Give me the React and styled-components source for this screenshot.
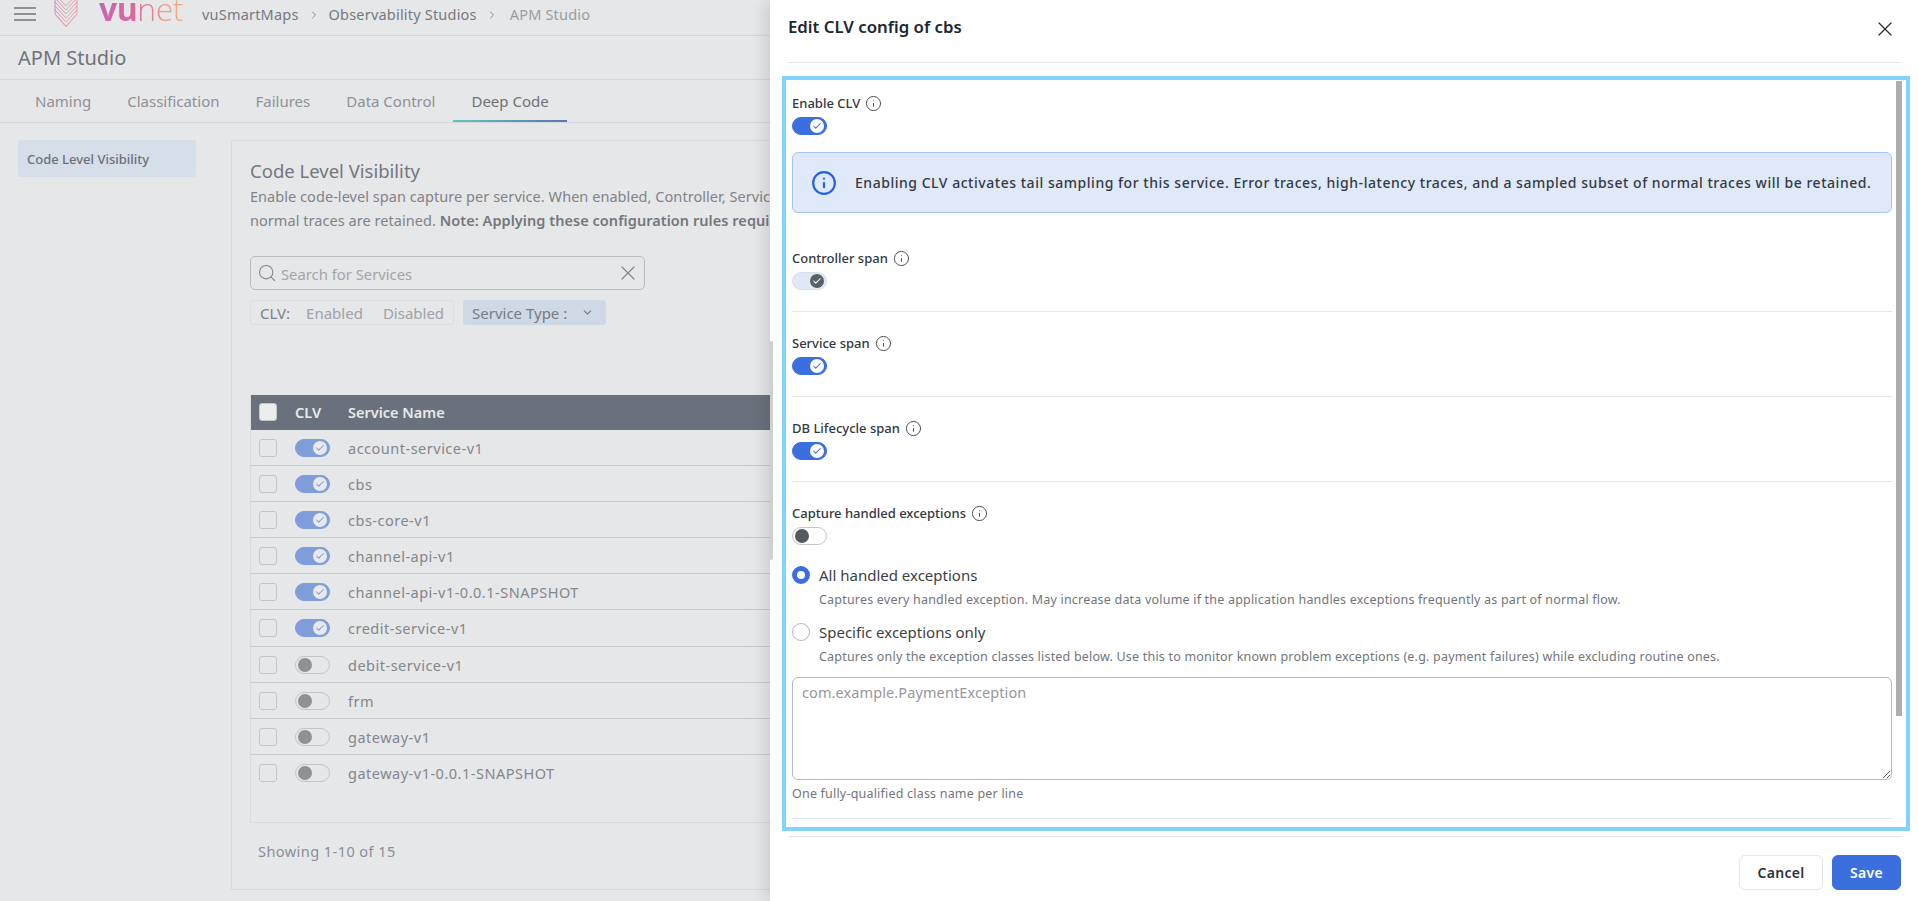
import styled, { createGlobalStyle } from 'styled-components';
import { Check, ChevronDown, ChevronRight, Info, Search, X } from 'lucide-react';

const FONT = `"Noto Sans", "Open Sans", sans-serif`;

const GlobalStyle = createGlobalStyle`
  html, body {
    margin: 0;
    height: 100%;
    overflow: hidden;
    background: #e6e7e9;
    font-family: ${FONT};
  }
  * { box-sizing: border-box; }
`;

const Page = styled.div`
  position: relative;
  width: 1918px;
  height: 901px;
  overflow: hidden;
  background: #e6e7e9;
  color: #76797f;
`;

const TopBar = styled.div`
  height: 36px;
  display: flex;
  align-items: flex-start;
  padding-left: 12px;
  border-bottom: 1px solid #d6d7da;
  overflow: hidden;
`;

const Burger = styled.svg`
  flex: none;
  margin-top: 4px;
`;

const LogoMark = styled.svg`
  margin-left: 18px;
  flex: none;
`;

const Wordmark = styled.div`
  margin: -5px 0 0 21px;
  width: 86px;
  font-family: "Open Sans", sans-serif;
  font-size: 32px;
  line-height: 28px;
  letter-spacing: -0.5px;
  font-weight: 300;
  background: linear-gradient(90deg, #c566b0 0%, #e0689b 45%, #ee9a7d 75%, #edb27e 100%);
  -webkit-background-clip: text;
  background-clip: text;
  color: transparent;

  b { font-weight: 700; }
`;

const Crumbs = styled.div`
  margin-left: 17px;
  height: 28px;
  display: flex;
  align-items: center;
  font-size: 14.5px;
  letter-spacing: 0.2px;

  svg { margin: 2px 9px 0; color: #8b8d91; }
`;

const Crumb = styled.span`
  margin-left: ${(p) => (p.$current ? '3px' : '0')};
  color: ${(p) => (p.$current ? '#9a9ca1' : '#76797f')};
`;

const TitleRow = styled.div`
  height: 44px;
  padding-left: 18px;
  display: flex;
  align-items: center;
  font-size: 20px;
  color: #70737a;
  border-bottom: 1px solid #d6d7da;
`;

const Tabs = styled.div`
  height: 43px;
  padding-left: 17px;
  display: flex;
  border-bottom: 1px solid #d6d7da;
`;

const Tab = styled.div`
  position: relative;
  height: 42px;
  padding: 0 18px;
  display: flex;
  align-items: center;
  font-size: 15px;
  color: ${(p) => (p.$active ? '#6e7177' : '#8f9196')};

  ${(p) =>
    p.$active &&
    `&::after {
      content: '';
      position: absolute;
      left: 0;
      right: 0;
      bottom: 0;
      height: 2px;
      background: linear-gradient(90deg, #5cc7bd, #5d73b5);
    }`}
`;

const Content = styled.div`
  display: flex;
  align-items: flex-start;
  padding: 17px 0 0 18px;
`;

const SideNav = styled.div`
  flex: none;
  width: 178px;
  height: 37px;
  padding-left: 9px;
  display: flex;
  align-items: center;
  border-radius: 2px;
  background: #d6deE9;
  font-size: 13px;
  font-weight: 500;
  color: #6b6f76;
`;

const Panel = styled.div`
  flex: none;
  width: 1660px;
  height: 750px;
  margin-left: 35px;
  padding: 17px 18px;
  border: 1px solid #d9dadd;
`;

const PanelTitle = styled.div`
  font-size: 18.5px;
  line-height: 26px;
  color: #74777d;
`;

const Description = styled.div`
  font-size: 14.5px;
  line-height: 24px;
  letter-spacing: 0.05px;
  white-space: nowrap;
  color: #808388;

  b { font-weight: 600; color: #74777d; }
`;

const SearchBox = styled.div`
  width: 395px;
  height: 34px;
  margin-top: 24px;
  padding: 0 4px 0 6px;
  display: flex;
  align-items: center;
  border: 1px solid #b9bbbf;
  border-radius: 5px;
  font-size: 14.8px;
  color: #a2a4a8;

  span { margin: 2px 0 0 4px; flex: 1; }
  svg { color: #85878c; }
`;

const FilterRow = styled.div`
  margin-top: 10px;
  display: flex;
  gap: 9px;
`;

const ClvFilter = styled.div`
  width: 204px;
  height: 25px;
  padding-left: 9px;
  display: flex;
  align-items: center;
  border: 1px solid #dcdde0;
  border-radius: 3px;
  font-size: 15px;
  color: #a0a2a6;

  b { font-weight: 400; color: #7b7e84; margin-right: 16px; }
  span { margin-right: 20px; }
`;

const TypeFilter = styled.div`
  width: 143px;
  height: 25px;
  padding-left: 9px;
  display: flex;
  align-items: center;
  gap: 14px;
  border-radius: 3px;
  background: #cfd9e6;
  font-size: 15px;
  color: #757b84;
`;

const Table = styled.div`
  height: 428px;
  margin-top: 70px;
  border-left: 1px solid #d9dadd;
  border-bottom: 1px solid #d9dadd;
`;

const HeadRow = styled.div`
  height: 35px;
  padding: 0 0 2px 8px;
  display: flex;
  align-items: center;
  background: #6b717c;
  color: #e8e9eb;
  font-size: 14.5px;
  font-weight: 600;
`;

const Row = styled.div`
  height: ${(p) => (p.$tall ? 37 : 36)}px;
  padding-left: 8px;
  display: flex;
  align-items: center;
  border-bottom: ${(p) => (p.$last ? 'none' : '1px solid #c9cacd')};
  font-size: 14.5px;
  letter-spacing: 0.5px;
  color: #83868b;
`;

const CheckCell = styled.span`
  flex: none;
  width: 18px;
  height: 18px;
  border-radius: 3px;
  border: 1px solid #c3c5c8;
  background: ${(p) => (p.$head ? '#eceded' : 'transparent')};
`;

const ClvCell = styled.div`
  flex: none;
  width: 53px;
  margin-left: 18px;
  display: flex;
`;

const SwitchTrack = styled.span`
  flex: none;
  width: 35px;
  height: 18px;
  padding: 0 2px;
  display: flex;
  align-items: center;
  justify-content: ${(p) => (p.$on ? 'flex-end' : 'flex-start')};
  border-radius: 9px;
  border: 1px solid ${(p) => p.$border};
  background: ${(p) => p.$bg};
`;

const SwitchKnob = styled.span`
  width: 14px;
  height: 14px;
  display: flex;
  align-items: center;
  justify-content: center;
  border-radius: 50%;
  background: ${(p) => p.$color};
  color: ${(p) => p.$tick};
`;

const Showing = styled.div`
  margin: 18px 0 0 8px;
  font-size: 14.5px;
  letter-spacing: 0.45px;
  color: #8b8e93;
`;

const EdgeBar = styled.div`
  position: absolute;
  left: 770px;
  top: 341px;
  width: 3px;
  height: 219px;
  border-radius: 0 2px 2px 0;
  background: #d0d0d0;
  z-index: 3;
`;

const Drawer = styled.aside`
  position: absolute;
  top: 0;
  right: 0;
  bottom: 0;
  width: 1148px;
  display: flex;
  flex-direction: column;
  background: #fff;
  box-shadow: -6px 0 14px rgba(0, 0, 0, 0.1);
  color: #2c3038;
  z-index: 2;
`;

const DrawerHead = styled.div`
  flex: none;
  height: 63px;
  margin: 0 16px 0 18px;
  padding: 15px 0 0 0;
  display: flex;
  justify-content: space-between;
  border-bottom: 1px solid #e4e5e7;
  font-size: 16.8px;
  font-weight: 600;
  line-height: 24px;
  color: #22262d;
`;

const CloseIcon = styled(X)`
  margin: 2px 5px 0 0;
  color: #2c3038;
`;

const Body = styled.div`
  position: relative;
  flex: none;
  height: 755px;
  margin: 13px 8px 0 12px;
  padding: 0 14px 0 6px;
  border: 4px solid #80d4ff;
  overflow: hidden;
`;

const ScrollThumb = styled.div`
  position: absolute;
  top: 1px;
  right: 4px;
  width: 6px;
  height: 635px;
  background: #aeaeae;
`;

const Section = styled.section`
  padding: ${(p) => p.$top ?? 22}px 0 ${(p) => p.$bottom ?? 21}px;
  border-bottom: ${(p) => (p.$plain ? 'none' : '1px solid #e4e5e7')};
`;

const FieldLabel = styled.div`
  height: 18px;
  margin-bottom: 5px;
  display: flex;
  align-items: center;
  gap: 5px;
  font-size: 13px;
  font-weight: 500;
  color: #33373e;

  svg { color: #4b4f56; }
`;

const Alert = styled.div`
  height: 61px;
  margin-top: 17px;
  padding-left: 18px;
  display: flex;
  align-items: center;
  gap: 18px;
  border: 1px solid #a9c4f2;
  border-radius: 6px;
  background: #e0e9fa;
  font-size: 14px;
  font-weight: 500;
  letter-spacing: 0.53px;
  color: #343a44;

  svg { flex: none; color: #2563d9; }
`;

const RadioRow = styled.div`
  margin-top: ${(p) => p.$top}px;
  height: 18px;
  display: flex;
  align-items: center;
  gap: 9px;
  font-size: 15px;
  color: #3b3f46;
`;

const RadioDot = styled.span`
  flex: none;
  width: 18px;
  height: 18px;
  border-radius: 50%;
  border: ${(p) => (p.$on ? '5px solid #3b6fde' : '1px solid #b4b6ba')};
  background: #fff;
`;

const RadioHint = styled.div`
  margin: 7px 0 0 27px;
  font-size: 12.5px;
  line-height: 18px;
  letter-spacing: 0.2px;
  color: #72757b;
`;

const ClassInput = styled.textarea`
  display: block;
  width: 100%;
  height: 103px;
  margin-top: 11px;
  padding: 4px 9px;
  border: 1px solid #b6b8bb;
  border-radius: 6px;
  outline: none;
  resize: vertical;
  font-family: ${FONT};
  font-size: 14.5px;
  letter-spacing: 0.1px;
  line-height: 20px;

  &::placeholder { color: #96989c; }
`;

const InputHint = styled.div`
  margin-top: 5px;
  font-size: 12.5px;
  line-height: 18px;
  letter-spacing: 0.2px;
  color: #72757b;
`;

const DrawerFoot = styled.div`
  flex: none;
  height: 65px;
  margin: 5px 16px 0 18px;
  padding: 18px 1px 0 0;
  display: flex;
  justify-content: flex-end;
  gap: 9px;
  border-top: 1px solid #e4e5e7;
`;

const Button = styled.button`
  width: ${(p) => p.$width}px;
  height: 35px;
  border-radius: 6px;
  border: 1px solid ${(p) => (p.$primary ? '#3b6fde' : '#e4e5e7')};
  background: ${(p) => (p.$primary ? '#3b6fde' : '#fff')};
  color: ${(p) => (p.$primary ? '#fff' : '#2f333a')};
  font-family: ${FONT};
  font-size: 14px;
  font-weight: 600;
  letter-spacing: 0.3px;
`;

const services = [
  ['account-service-v1', true],
  ['cbs', true],
  ['cbs-core-v1', true],
  ['channel-api-v1', true],
  ['channel-api-v1-0.0.1-SNAPSHOT', true],
  ['credit-service-v1', true],
  ['debit-service-v1', false],
  ['frm', false],
  ['gateway-v1', false],
  ['gateway-v1-0.0.1-SNAPSHOT', false],
];

const switchThemes = {
  on: { bg: '#3b6fde', border: '#3b6fde', knob: '#fff', tick: '#3b6fde' },
  off: { bg: '#fff', border: '#c4c5c8', knob: '#55585e', tick: '#fff' },
  locked: { bg: '#e0e7f5', border: '#d8dfee', knob: '#5a5e66', tick: '#fff' },
  dimOn: { bg: '#7f9ddb', border: '#7f9ddb', knob: '#e8e9eb', tick: '#7f9ddb' },
  dimOff: { bg: '#e6e7e9', border: '#c4c5c8', knob: '#8f9194', tick: '#fff' },
};

function Toggle({ kind, on }) {
  const t = switchThemes[kind];
  return (
    <SwitchTrack $on={on} $bg={t.bg} $border={t.border}>
      <SwitchKnob $color={t.knob} $tick={t.tick}>
        {on && <Check size={10} strokeWidth={2.5} />}
      </SwitchKnob>
    </SwitchTrack>
  );
}

function Label({ children }) {
  return (
    <FieldLabel>
      {children}
      <Info size={17} strokeWidth={1.4} />
    </FieldLabel>
  );
}

function Logo() {
  const rows = [-6, -2, 2, 6, 10, 14];
  return (
    <LogoMark width="24" height="28" viewBox="0 0 24 28" fill="none">
      <defs>
        <linearGradient id="mark" x1="0" y1="0" x2="1" y2="1">
          <stop offset="0" stopColor="#c98ac0" />
          <stop offset="0.6" stopColor="#e79aa9" />
          <stop offset="1" stopColor="#efc39a" />
        </linearGradient>
      </defs>
      {rows.map((y) => (
        <path key={y} d={`M1 ${y}L12 ${y + 12}L23 ${y}`} stroke="url(#mark)" strokeWidth="1" />
      ))}
      <path d="M1 0V14L12 27L23 14V0" stroke="url(#mark)" strokeWidth="1" />
    </LogoMark>
  );
}

export default function App() {
  return (
    <Page>
      <GlobalStyle />
      <TopBar>
        <Burger width="24" height="20" viewBox="0 0 24 20" fill="none" stroke="#8f9195" strokeWidth="2">
          <path d="M2 4H24M2 10H24M2 16H24" />
        </Burger>
        <Logo />
        <Wordmark>
          <b>vu</b>net
        </Wordmark>
        <Crumbs>
          <Crumb>vuSmartMaps</Crumb>
          <ChevronRight size={12} />
          <Crumb>Observability Studios</Crumb>
          <ChevronRight size={12} />
          <Crumb $current>APM Studio</Crumb>
        </Crumbs>
      </TopBar>
      <TitleRow>APM Studio</TitleRow>
      <Tabs>
        <Tab>Naming</Tab>
        <Tab>Classification</Tab>
        <Tab>Failures</Tab>
        <Tab>Data Control</Tab>
        <Tab $active>Deep Code</Tab>
      </Tabs>
      <Content>
        <SideNav>Code Level Visibility</SideNav>
        <Panel>
          <PanelTitle>Code Level Visibility</PanelTitle>
          <Description>Enable code-level span capture per service. When enabled, Controller, Service</Description>
          <Description>
            normal traces are retained. <b>Note: Applying these configuration rules requires</b>
          </Description>
          <SearchBox>
            <Search size={20} strokeWidth={1.3} />
            <span>Search for Services</span>
            <X size={24} strokeWidth={1.2} />
          </SearchBox>
          <FilterRow>
            <ClvFilter>
              <b>CLV:</b>
              <span>Enabled</span>
              <span>Disabled</span>
            </ClvFilter>
            <TypeFilter>
              Service Type :
              <ChevronDown size={13} strokeWidth={2.2} />
            </TypeFilter>
          </FilterRow>
          <Table>
            <HeadRow>
              <CheckCell $head />
              <ClvCell>CLV</ClvCell>
              Service Name
            </HeadRow>
            {services.map(([name, on], i) => (
              <Row key={name} $tall={i === 5} $last={i === services.length - 1}>
                <CheckCell />
                <ClvCell>
                  <Toggle kind={on ? 'dimOn' : 'dimOff'} on={on} />
                </ClvCell>
                {name}
              </Row>
            ))}
          </Table>
          <Showing>Showing 1-10 of 15</Showing>
        </Panel>
      </Content>

      <EdgeBar />
      <Drawer>
        <DrawerHead>
          Edit CLV config of cbs
          <CloseIcon size={24} strokeWidth={1.3} />
        </DrawerHead>
        <Body>
          <ScrollThumb />
          <Section $top={14} $bottom={36} $plain>
            <Label>Enable CLV</Label>
            <Toggle kind="on" on />
            <Alert>
              <Info size={26} strokeWidth={2} />
              Enabling CLV activates tail sampling for this service. Error traces, high-latency traces, and a sampled subset of normal traces will be retained.
            </Alert>
          </Section>
          <Section $top={0}>
            <Label>Controller span</Label>
            <Toggle kind="locked" on />
          </Section>
          <Section>
            <Label>Service span</Label>
            <Toggle kind="on" on />
          </Section>
          <Section>
            <Label>DB Lifecycle span</Label>
            <Toggle kind="on" on />
          </Section>
          <Section $bottom={15}>
            <Label>Capture handled exceptions</Label>
            <Toggle kind="off" />
            <RadioRow $top={21}>
              <RadioDot $on />
              All handled exceptions
            </RadioRow>
            <RadioHint>
              Captures every handled exception. May increase data volume if the application handles exceptions frequently as part of normal flow.
            </RadioHint>
            <RadioRow $top={14}>
              <RadioDot />
              Specific exceptions only
            </RadioRow>
            <RadioHint>
              Captures only the exception classes listed below. Use this to monitor known problem exceptions (e.g. payment failures) while excluding routine ones.
            </RadioHint>
            <ClassInput placeholder="com.example.PaymentException" />
            <InputHint>One fully-qualified class name per line</InputHint>
          </Section>
        </Body>
        <DrawerFoot>
          <Button $width={84}>Cancel</Button>
          <Button $width={69} $primary>
            Save
          </Button>
        </DrawerFoot>
      </Drawer>
    </Page>
  );
}
